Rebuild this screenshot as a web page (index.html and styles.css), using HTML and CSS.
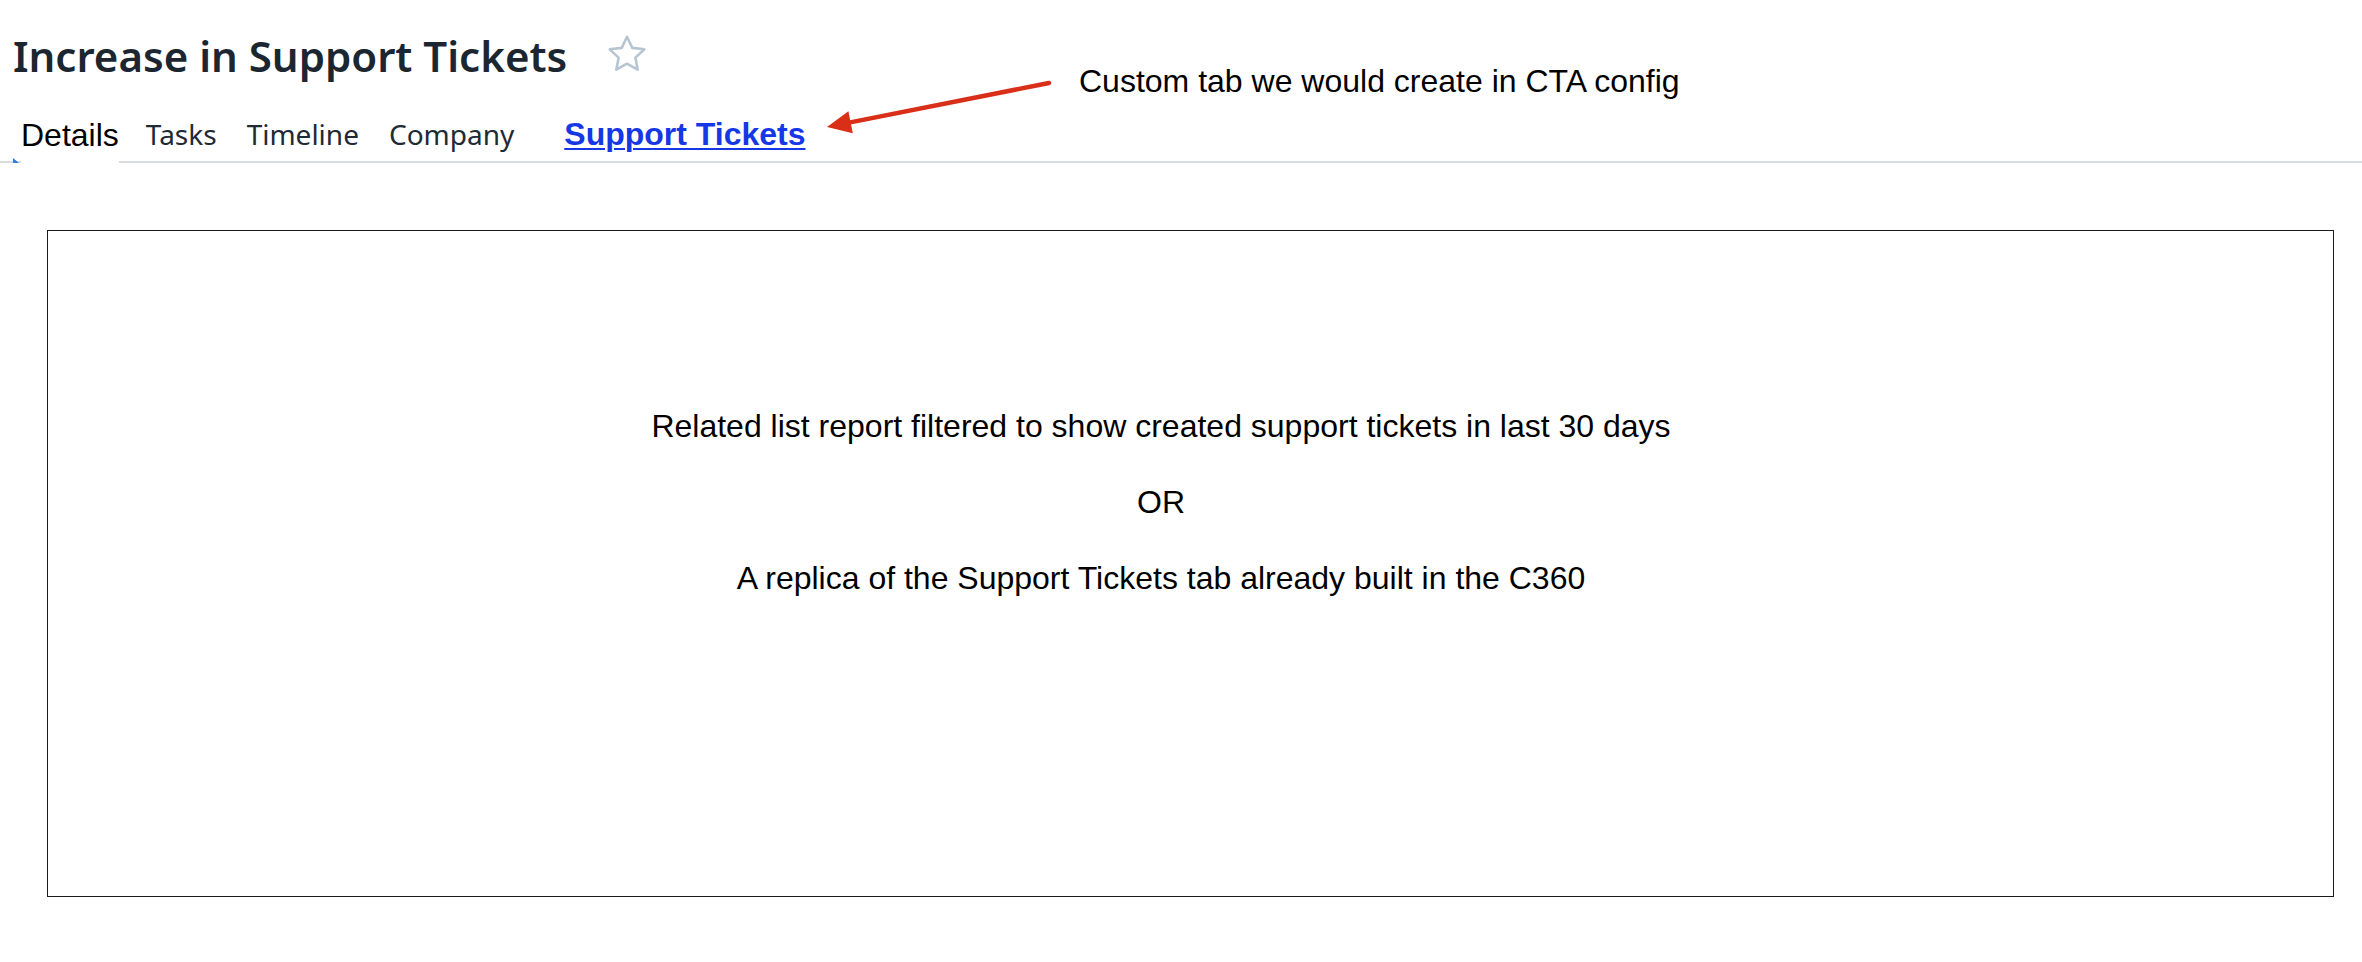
FILE: index.html
```html
<!DOCTYPE html>
<html lang="en">
<head>
<meta charset="utf-8">
<title>Increase in Support Tickets</title>
<link rel="stylesheet" href="styles.css">
</head>
<body>
<div class="page">
  <header class="header">
    <div class="title-row">
      <h1 class="title">Increase in Support Tickets</h1>
      <svg class="star" viewBox="0 0 24 24" width="44" height="44" aria-hidden="true">
        <path d="M12 2.6l2.85 6.05 6.6.8-4.88 4.55 1.27 6.55L12 17.3l-5.84 3.25 1.27-6.55L2.55 9.45l6.6-.8z" fill="none" stroke="currentColor" stroke-width="1.4" stroke-linejoin="round"/>
      </svg>
    </div>
    <nav class="tabs">
      <span class="tab-marker"></span>
      <span class="tab tab-active">Details</span>
      <span class="tab">Tasks</span>
      <span class="tab">Timeline</span>
      <span class="tab">Company</span>
      <a class="tab tab-link" href="#">Support Tickets</a>
    </nav>
  </header>

  <main class="content">
    <div class="panel">
      <p class="panel-line">Related list report filtered to show created support tickets in last 30 days</p>
      <p class="panel-line">OR</p>
      <p class="panel-line">A replica of the Support Tickets tab already built in the C360</p>
    </div>
  </main>

  <div class="note">Custom tab we would create in CTA config</div>
  <svg class="arrow" width="2362" height="200" viewBox="0 0 2362 200" aria-hidden="true">
    <line x1="1049" y1="83" x2="849" y2="122.6" stroke="#d92e17" stroke-width="4.5" stroke-linecap="round"/>
    <polygon points="827,127 848.4,111.3 852.8,133.3" fill="#d92e17"/>
  </svg>
</div>
</body>
</html>
```

FILE: styles.css
```css
html, body {
  margin: 0;
  padding: 0;
  background: #ffffff;
}

body {
  font-family: "Liberation Sans", Arial, Helvetica, sans-serif;
  color: #000;
}

.page {
  position: relative;
  width: 2362px;
  min-height: 962px;
}

.header {
  padding-top: 31px;
}

.title-row {
  display: flex;
  align-items: center;
  padding-left: 13px;
  height: 50px;
}

.title {
  margin: 0;
  font-family: "Noto Sans", "Open Sans", sans-serif;
  font-weight: 600;
  font-size: 42px;
  line-height: 50px;
  color: #1c2630;
  letter-spacing: 0;
}

.star {
  margin-left: 38px;
  margin-top: -4px;
  color: #b7c4d2;
}

.tabs {
  position: relative;
  display: flex;
  align-items: baseline;
  margin-top: 33px;
  height: 47px;
  border-bottom: 2px solid #d9dcdf;
}

.tab {
  font-family: "Noto Sans", "Open Sans", sans-serif;
  font-size: 28px;
  line-height: 40px;
  color: #1e2a34;
  margin-right: 30px;
  white-space: nowrap;
}

.tab-active {
  font-family: "Liberation Sans", Arial, sans-serif;
  font-size: 32px;
  color: #000;
  background: #fff;
  margin-left: 21px;
  margin-right: 27px;
  padding-bottom: 9px;
  margin-bottom: -2px;
  position: relative;
  top: 1px;
  z-index: 1;
}

.tab-link {
  font-family: "Liberation Sans", Arial, sans-serif;
  font-size: 32px;
  font-weight: 700;
  color: #1537e6;
  text-decoration: underline;
  text-decoration-thickness: 2px;
  text-underline-offset: 3px;
  margin-left: 20px;
}

.tab-marker {
  position: absolute;
  left: 13px;
  bottom: -2px;
  width: 0;
  height: 0;
  border-left: 6px solid #2f7fd8;
  border-top: 5px solid transparent;
}

.content {
  padding: 67px 28px 0 47px;
}

.panel {
  box-sizing: border-box;
  height: 667px;
  border: 1px solid #1a1a1a;
  padding: 177px 59px 0 0;
  display: flex;
  flex-direction: column;
  align-items: center;
  gap: 40px;
}

.panel-line {
  margin: 0;
  font-family: "Liberation Sans", Arial, sans-serif;
  font-size: 32px;
  line-height: 36px;
  color: #000;
  text-align: center;
}

.note {
  position: absolute;
  left: 1079px;
  top: 63px;
  font-family: "Liberation Sans", Arial, sans-serif;
  font-size: 32px;
  line-height: 36px;
  color: #000;
  white-space: nowrap;
}

.arrow {
  position: absolute;
  left: 0;
  top: 0;
  pointer-events: none;
}
```
